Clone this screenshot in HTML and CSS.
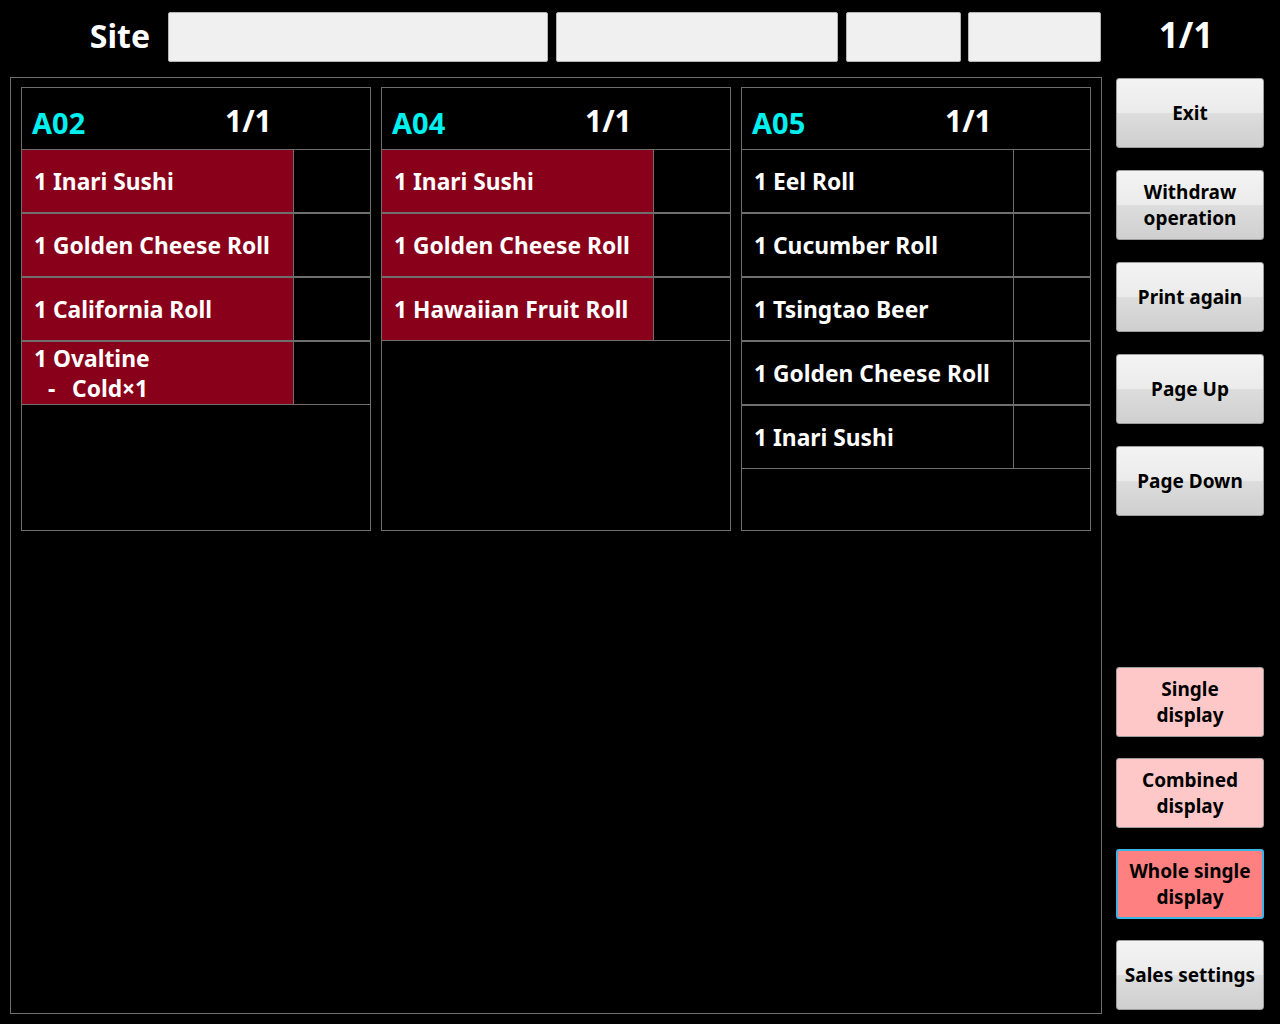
FILE: index.html
```html
<!DOCTYPE html>
<html>
<head>
<meta charset="utf-8">
<link rel="stylesheet" href="styles.css">
</head>
<body>
<div class="topbar">
  <div class="site-label">Site</div>
  <div class="field f1"></div>
  <div class="field f2"></div>
  <div class="field f3"></div>
  <div class="field f4"></div>
  <div class="page-count">1/1</div>
</div>
<div class="content">
  <div class="panel">
    <div class="card">
      <div class="card-head"><span class="table-id">A02</span><span class="card-page">1/1</span></div>
      <div class="row hot"><div class="item">1 Inari Sushi</div><div class="side"></div></div>
      <div class="row hot"><div class="item">1 Golden Cheese Roll</div><div class="side"></div></div>
      <div class="row hot"><div class="item">1 California Roll</div><div class="side"></div></div>
      <div class="row hot"><div class="item multi">1 Ovaltine<br><span class="opt"><span class="dash">-</span>Cold×1</span></div><div class="side"></div></div>
    </div>
    <div class="card">
      <div class="card-head"><span class="table-id">A04</span><span class="card-page">1/1</span></div>
      <div class="row hot"><div class="item">1 Inari Sushi</div><div class="side"></div></div>
      <div class="row hot"><div class="item">1 Golden Cheese Roll</div><div class="side"></div></div>
      <div class="row hot"><div class="item">1 Hawaiian Fruit Roll</div><div class="side"></div></div>
    </div>
    <div class="card">
      <div class="card-head"><span class="table-id">A05</span><span class="card-page">1/1</span></div>
      <div class="row"><div class="item">1 Eel Roll</div><div class="side"></div></div>
      <div class="row"><div class="item">1 Cucumber Roll</div><div class="side"></div></div>
      <div class="row"><div class="item">1 Tsingtao Beer</div><div class="side"></div></div>
      <div class="row"><div class="item">1 Golden Cheese Roll</div><div class="side"></div></div>
      <div class="row"><div class="item">1 Inari Sushi</div><div class="side"></div></div>
    </div>
  </div>
  <div class="sidebar">
    <div class="btn-group">
      <div class="btn">Exit</div>
      <div class="btn">Withdraw<br>operation</div>
      <div class="btn">Print again</div>
      <div class="btn">Page Up</div>
      <div class="btn">Page Down</div>
    </div>
    <div class="btn-group bottom">
      <div class="btn pink">Single<br>display</div>
      <div class="btn pink">Combined<br>display</div>
      <div class="btn active">Whole single<br>display</div>
      <div class="btn">Sales settings</div>
    </div>
  </div>
</div>
</body>
</html>
```

FILE: styles.css
```css
* { box-sizing: border-box; }
html, body {
  margin: 0;
  padding: 0;
  background: #000;
  width: 1280px;
  height: 1024px;
  overflow: hidden;
  font-family: "Noto Sans", "Open Sans", sans-serif;
  font-weight: 700;
}
.topbar {
  height: 77px;
  display: flex;
  align-items: flex-start;
  padding-top: 12px;
}
.site-label {
  width: 152px;
  padding-right: 2px;
  text-align: right;
  color: #fff;
  font-size: 32px;
  line-height: 48px;
  margin-right: 16px;
}
.field {
  height: 50px;
  background: #f0f0f0;
  border: 1px solid #b4b4b4;
  border-radius: 2px;
  margin-right: 8px;
}
.f1 { width: 380px; }
.f2 { width: 282px; }
.f3 { width: 115px; margin-right: 7px; }
.f4 { width: 133px; margin-right: 0; }
.page-count {
  width: 172px;
  text-align: center;
  color: #fff;
  font-size: 35px;
  line-height: 46px;
  padding-right: 2px;
}
.content {
  display: flex;
  align-items: flex-start;
}
.panel {
  margin-left: 10px;
  width: 1092px;
  height: 937px;
  border: 1px solid #6e6e6e;
  padding: 9px 10px;
  display: flex;
  align-items: flex-start;
  gap: 10px;
}
.card {
  width: 350px;
  height: 444px;
  border: 1px solid #6e6e6e;
  display: flex;
  flex-direction: column;
}
.card-head {
  height: 61px;
  flex-shrink: 0;
  display: flex;
  align-items: flex-end;
  padding: 0 0 8px 10px;
  font-size: 29px;
  line-height: 36px;
}
.table-id {
  color: #00f0f0;
  width: 193px;
}
.card-page { color: #fff; position: relative; top: -2px; font-size: 30px; }
.row {
  display: flex;
  height: 64px;
  flex-shrink: 0;
}
.item {
  width: 272px;
  border-top: 1px solid #6e6e6e;
  border-bottom: 1px solid #6e6e6e;
  border-right: 1px solid #6e6e6e;
  color: #fff;
  font-size: 22.8px;
  display: flex;
  align-items: center;
  padding-left: 12px;
  white-space: nowrap;
}
.item.multi {
  display: block;
  line-height: 30px;
  padding-top: 2px;
}
.opt { padding-left: 14px; }
.dash { display: inline-block; width: 24px; }
.side {
  flex: 1;
  border-top: 1px solid #6e6e6e;
  border-bottom: 1px solid #6e6e6e;
}
.row.hot .item { background: #89001a; }
.sidebar {
  margin-left: 14px;
  width: 148px;
  height: 936px;
  display: flex;
  flex-direction: column;
}
.btn-group {
  display: flex;
  flex-direction: column;
  gap: 22px;
  padding-top: 1px;
}
.btn-group.bottom {
  margin-top: 151px;
  gap: 21px;
  padding-top: 0;
}
.btn {
  height: 70px;
  border: 1px solid #9e9e9e;
  border-radius: 3px;
  background: linear-gradient(to bottom, #f3f3f3 0%, #ebebeb 50%, #dddddd 50%, #cfcfcf 100%);
  color: #000;
  font-size: 19px;
  line-height: 26px;
  display: flex;
  align-items: center;
  justify-content: center;
  text-align: center;
}
.btn.pink { background: #ffc8c8; }
.btn.active { background: #ff8080; border: 2px solid #3cb4e6; }
```
